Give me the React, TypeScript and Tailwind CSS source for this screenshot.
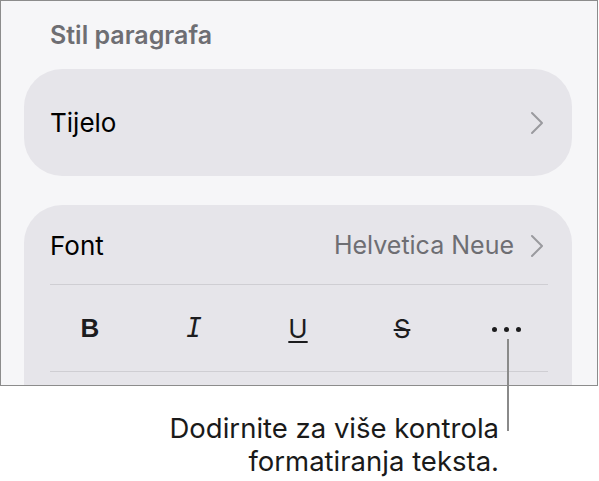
import React from "react";

function Chevron() {
  return (
    <svg width="14" height="24" viewBox="0 0 14 24" fill="none">
      <path d="M2 2 L12 12 L2 22" stroke="#9a9a9f" strokeWidth="2" strokeLinecap="round" strokeLinejoin="round" />
    </svg>
  );
}

export default function App() {
  return (
    <div className="w-[599px] h-[481px] bg-white relative" style={{ fontFamily: "Inter, 'Liberation Sans', sans-serif" }}>
      <div className="w-[598px] h-[386px] border border-[#8c8c8c] bg-[#f6f6f8] overflow-hidden">
        <div className="pl-[49px] pt-[19px] h-[68px] text-[25px] leading-[30px] font-semibold text-[#6e6e73]">
          Stil paragrafa
        </div>
        <div className="ml-[23px] w-[548px] h-[107px] rounded-[38px] bg-[#e6e5ea] flex items-center justify-between pl-[26px] pr-[28px]">
          <span className="text-[26px] text-black">Tijelo</span>
          <Chevron />
        </div>
        <div className="ml-[23px] mt-[29px] w-[548px] h-[220px] rounded-[38px] bg-[#e6e5ea] pl-[26px] pr-[24px]">
          <div className="h-[80px] flex items-center justify-between border-b border-[#cfced3] pt-[2px]">
            <span className="text-[26px] text-black">Font</span>
            <div className="flex items-center gap-[16px] pr-[4px]">
              <span className="text-[25px] text-[#6e6e73]">Helvetica Neue</span>
              <Chevron />
            </div>
          </div>
          <div className="h-[87px] border-b border-[#cfced3]">
            <div className="ml-[-12px] w-[520px] h-full grid grid-cols-5 items-center">
              <div className="flex justify-center">
                <span className="text-[26px] font-bold text-[#1c1c1e]" style={{ fontFamily: "'Liberation Sans', sans-serif" }}>B</span>
              </div>
              <div className="flex justify-center">
                <span className="text-[26px] italic text-[#1c1c1e]" style={{ fontFamily: "'DejaVu Sans Mono', monospace" }}>I</span>
              </div>
              <div className="flex justify-center">
                <span className="text-[26px] text-[#1c1c1e] underline decoration-[2px] underline-offset-[3px]">U</span>
              </div>
              <div className="flex justify-center">
                <span className="text-[26px] text-[#1c1c1e] line-through decoration-[1.5px]">S</span>
              </div>
              <div className="flex justify-center gap-[7px] pt-[2px]">
                <span className="w-[5px] h-[5px] rounded-full bg-[#1c1c1e]" />
                <span className="w-[5px] h-[5px] rounded-full bg-[#1c1c1e]" />
                <span className="w-[5px] h-[5px] rounded-full bg-[#1c1c1e]" />
              </div>
            </div>
          </div>
        </div>
      </div>
      <div className="absolute left-[507px] top-[339px] w-[2px] h-[92px] bg-[#8a8a8a]" />
      <div className="pt-[26px] pr-[100px] text-right text-[27.5px] leading-[33px] text-[#1a1a1a]">
        <div>Dodirnite za više kontrola</div>
        <div>formatiranja teksta.</div>
      </div>
    </div>
  );
}
